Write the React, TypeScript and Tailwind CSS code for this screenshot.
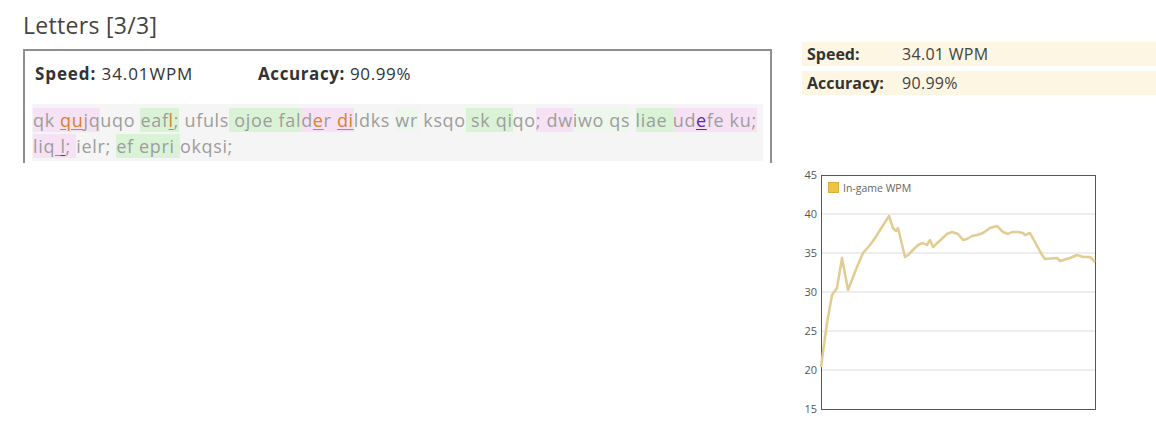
import React from "react";

const PINK = "bg-[#f7e2f5]";
const GREEN = "bg-[#daf3d7]";
const FAINT = "bg-[#eef7ec]";

const line1: React.ReactNode = (
  <>
    <span className={PINK}>
      qk <u className="text-[#d8812a] decoration-[#d8812a] underline-offset-2">qu</u>jq
    </span>
    <span>uqo </span>
    <span className={GREEN}>
      eaf<u className="text-[#d8812a] decoration-[#d8812a] underline-offset-2">l</u>;
    </span>
    <span> ufuls</span>
    <span className={GREEN}> ojoe fal</span>
    <span className={PINK}>
      d<u className="text-[#d8812a] decoration-[#d8812a] underline-offset-2">e</u>r{" "}
      <u className="text-[#d8812a] decoration-[#d8812a] underline-offset-2">di</u>
    </span>
    <span>ldks </span>
    <span className={FAINT}>wr</span>
    <span> ksqo</span>
    <span className={GREEN}> sk qi</span>
    <span>qo</span>
    <span className={PINK}>; dw</span>
    <span className={FAINT}>iwo qs</span>
    <span> </span>
    <span className={GREEN}>liae </span>
    <span className={PINK}>
      ud<u className="text-[#5b2ba6] decoration-[#5b2ba6] underline-offset-2">e</u>fe ku;
    </span>
  </>
);

const line2: React.ReactNode = (
  <>
    <span className={PINK}>
      liq<u className="decoration-[#d8812a] underline-offset-2"> </u>
      <u className="decoration-[#5b2ba6] underline-offset-2">l</u>;{" "}
    </span>
    <span>ielr; </span>
    <span className={GREEN}>ef epri </span>
    <span>okqsi;</span>
  </>
);

// wpm samples, already in chart pixel space (svg origin = 800,165)
const pts: [number, number][] = [
  [21, 202], [27, 158], [32, 130], [37, 123], [42, 93], [48, 125], [57, 102], [63, 88],
  [70, 80], [75, 73], [82, 62], [89, 51], [93, 63], [96, 66], [98, 63], [105, 92],
  [108, 90], [118, 80], [123, 78], [127, 80], [130, 75], [133, 82], [147, 69], [152, 67],
  [158, 69], [163, 75], [167, 74], [172, 71], [177, 70], [183, 68], [190, 63], [197, 61],
  [203, 67], [208, 69], [212, 67], [218, 67], [223, 68], [225, 70], [230, 68], [235, 77],
  [242, 90], [245, 94], [257, 93], [260, 96], [270, 93], [277, 90], [283, 92], [290, 92],
  [295, 97],
];

function Chart() {
  const grid = [49, 88, 127, 166, 205];
  const labels = ["45", "40", "35", "30", "25", "20", "15"];
  return (
    <svg width="300" height="256" viewBox="0 0 300 256" className="block">
      {grid.map((y) => (
        <line key={y} x1="21" x2="295" y1={y} y2={y} stroke="#dcdcdc" strokeWidth="1" />
      ))}
      <rect x="21.5" y="10.5" width="274" height="234" fill="none" stroke="#555" strokeWidth="1" />
      {labels.map((l, i) => (
        <text
          key={l}
          x="17"
          y={14 + i * 39}
          textAnchor="end"
          fontSize="11"
          fill="#555"
          fontFamily="'Open Sans', sans-serif"
        >
          {l}
        </text>
      ))}
      <polyline
        points={pts.map((p) => p.join(",")).join(" ")}
        fill="none"
        stroke="#e2cc92"
        strokeWidth="2.5"
        strokeLinejoin="round"
      />
      <rect x="28.5" y="17.5" width="10" height="10" fill="#edc346" stroke="#d9b040" />
      <text x="43" y="26.5" fontSize="10.5" fill="#666" fontFamily="'Open Sans', sans-serif">
        In-game WPM
      </text>
    </svg>
  );
}

export default function App() {
  return (
    <div className="flex w-[1156px] h-[431px] bg-white font-['Open_Sans',sans-serif] text-[#333]">
      <div className="w-[802px] pl-[23px] pt-[10px]">
        <h1 className="text-[23px] leading-[30px] tracking-[0.3px] text-[#444]">Letters [3/3]</h1>
        <div className="mt-[9px] w-[749px] h-[114px] border-2 border-b-0 border-[#8f8f8f] px-[7px] pt-[10px]">
          <div className="flex text-[17px] leading-[26px] pl-[3px]">
            <div className="w-[223px] tracking-[0.9px]">
              <b className="font-bold">Speed:</b> 34.01WPM
            </div>
            <div className="tracking-[0.6px]">
              <b className="font-bold">Accuracy:</b> 90.99%
            </div>
          </div>
          <div className="mt-[17px] h-[57px] bg-[#f5f5f5] pl-[1px] pt-[3px] text-[18px] leading-[26px] text-[#9d9d9d] tracking-[0.65px] whitespace-nowrap">
            <div>{line1}</div>
            <div>{line2}</div>
          </div>
        </div>
      </div>
      <div className="flex-1 pt-[42px]">
        <div className="flex flex-col gap-[5px] text-[16px]">
          <div className="flex h-[24px] items-center bg-[#fcf6e3] pl-[5px]">
            <span className="w-[95px] font-bold">Speed:</span>
            <span className="text-[#444] tracking-[0.3px]">34.01 WPM</span>
          </div>
          <div className="flex h-[24px] items-center bg-[#fcf6e3] pl-[5px]">
            <span className="w-[95px] font-bold">Accuracy:</span>
            <span className="text-[#444] tracking-[0.3px]">90.99%</span>
          </div>
        </div>
        <div className="mt-[70px] -ml-[2px]">
          <Chart />
        </div>
      </div>
    </div>
  );
}
